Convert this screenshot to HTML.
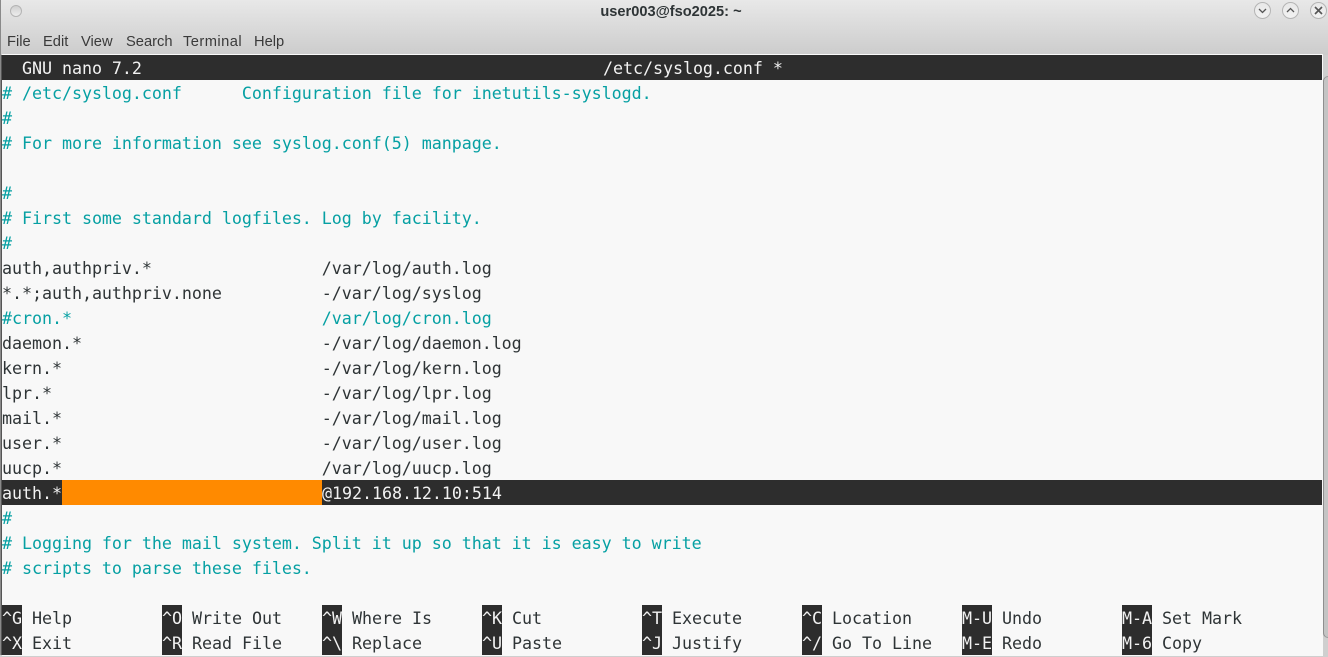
<!DOCTYPE html>
<html><head><meta charset="utf-8"><style>
html,body{margin:0;padding:0}
body{width:1328px;height:655px;overflow:hidden;position:relative;background:#cfcfcf}
#tb{position:absolute;left:0;top:0;width:1328px;height:55px;background:linear-gradient(#e8e8e8,#cccccc)}
#title{position:absolute;left:0;top:4px;width:1342px;text-align:center;font:bold 14.6px/17px "Liberation Sans",sans-serif;color:#2e3436}
.m{position:absolute;top:33px;font:14.7px/18px "Liberation Sans",sans-serif;color:#3a3a3a}
#term{position:absolute;left:2px;top:54px;width:1321px;height:601px;background:#f8f8f8;border-top:1px solid #fafafa;box-sizing:content-box}
.r{position:absolute;left:0;height:25px;width:1320px;white-space:pre;font:16.7px/27px "DejaVu Sans Mono",monospace;color:#2e3436;letter-spacing:-.053px}
.c{color:#06a0a3}
.d{position:absolute;background:#2d2d2d;height:25px;top:0}
.w{color:#f2f2f2}
.t{position:absolute;top:0;white-space:pre}
.btn{position:absolute;top:2px;width:17px;height:17px;border-radius:50%;box-sizing:border-box;border:1px solid #b4b4b4;background:linear-gradient(#e8e8e8,#f2f2f2)}
</style></head><body>
<div id="tb"></div>
<div id="title">user003@fso2025: ~</div>
<div class="btn" style="left:10px;top:5px;width:12px;height:12px;background:linear-gradient(#d0d0d0,#eeeeee)"></div>
<div class="btn" style="left:1254px"><svg width="15" height="15" style="display:block"><path d="M4 6l3.5 3.5L11 6" fill="none" stroke="#555" stroke-width="1.3"/></svg></div>
<div class="btn" style="left:1282px"><svg width="15" height="15" style="display:block"><path d="M4 9l3.5-3.5L11 9" fill="none" stroke="#555" stroke-width="1.3"/></svg></div>
<div class="btn" style="left:1310px"><svg width="15" height="15" style="display:block"><path d="M4 4l7 7M11 4l-7 7" fill="none" stroke="#555" stroke-width="1.6"/></svg></div>
<div class="m" style="left:7px">File</div>
<div class="m" style="left:43px">Edit</div>
<div class="m" style="left:81px">View</div>
<div class="m" style="left:126px">Search</div>
<div class="m" style="left:183px;letter-spacing:.45px">Terminal</div>
<div class="m" style="left:254px">Help</div>
<div style="position:absolute;left:0;top:0;width:1px;height:655px;background:#8a8a8a"></div>
<div style="position:absolute;left:1px;top:55px;width:1px;height:600px;background:#555"></div>
<div id="term">
<div class="r w" style="top:0;background:#2d2d2d;left:0;width:1320px">  GNU nano 7.2<span class="t" style="left:601px">/etc/syslog.conf *</span></div>
<div class="r c" style="top:25px"># /etc/syslog.conf      Configuration file for inetutils-syslogd.</div>
<div class="r c" style="top:50px">#</div>
<div class="r c" style="top:75px"># For more information see syslog.conf(5) manpage.</div>
<div class="r c" style="top:125px">#</div>
<div class="r c" style="top:150px"># First some standard logfiles. Log by facility.</div>
<div class="r c" style="top:175px">#</div>
<div class="r" style="top:200px">auth,authpriv.*                 /var/log/auth.log</div>
<div class="r" style="top:225px">*.*;auth,authpriv.none          -/var/log/syslog</div>
<div class="r c" style="top:250px">#cron.*                         /var/log/cron.log</div>
<div class="r" style="top:275px">daemon.*                        -/var/log/daemon.log</div>
<div class="r" style="top:300px">kern.*                          -/var/log/kern.log</div>
<div class="r" style="top:325px">lpr.*                           -/var/log/lpr.log</div>
<div class="r" style="top:350px">mail.*                          -/var/log/mail.log</div>
<div class="r" style="top:375px">user.*                          -/var/log/user.log</div>
<div class="r" style="top:400px">uucp.*                          /var/log/uucp.log</div>
<div class="r w" style="top:425px;background:#2d2d2d"><span style="position:absolute;left:60px;top:0;width:260px;height:25px;background:#ff8a00"></span><span class="t" style="left:0">auth.*</span><span class="t" style="left:320px">@192.168.12.10:514</span></div>
<div class="r c" style="top:450px">#</div>
<div class="r c" style="top:475px"># Logging for the mail system. Split it up so that it is easy to write</div>
<div class="r c" style="top:500px"># scripts to parse these files.</div>
<div class="r" style="top:550px"><span class="d" style="left:0;width:20px"></span><span class="t w" style="left:0">^G</span><span class="t" style="left:30px">Help</span><span class="d" style="left:160px;width:20px"></span><span class="t w" style="left:160px">^O</span><span class="t" style="left:190px">Write Out</span><span class="d" style="left:320px;width:20px"></span><span class="t w" style="left:320px">^W</span><span class="t" style="left:350px">Where Is</span><span class="d" style="left:480px;width:20px"></span><span class="t w" style="left:480px">^K</span><span class="t" style="left:510px">Cut</span><span class="d" style="left:640px;width:20px"></span><span class="t w" style="left:640px">^T</span><span class="t" style="left:670px">Execute</span><span class="d" style="left:800px;width:20px"></span><span class="t w" style="left:800px">^C</span><span class="t" style="left:830px">Location</span><span class="d" style="left:960px;width:30px"></span><span class="t w" style="left:960px">M-U</span><span class="t" style="left:1000px">Undo</span><span class="d" style="left:1120px;width:30px"></span><span class="t w" style="left:1120px">M-A</span><span class="t" style="left:1160px">Set Mark</span></div>
<div class="r" style="top:575px"><span class="d" style="left:0;width:20px"></span><span class="t w" style="left:0">^X</span><span class="t" style="left:30px">Exit</span><span class="d" style="left:160px;width:20px"></span><span class="t w" style="left:160px">^R</span><span class="t" style="left:190px">Read File</span><span class="d" style="left:320px;width:20px"></span><span class="t w" style="left:320px">^\</span><span class="t" style="left:350px">Replace</span><span class="d" style="left:480px;width:20px"></span><span class="t w" style="left:480px">^U</span><span class="t" style="left:510px">Paste</span><span class="d" style="left:640px;width:20px"></span><span class="t w" style="left:640px">^J</span><span class="t" style="left:670px">Justify</span><span class="d" style="left:800px;width:20px"></span><span class="t w" style="left:800px">^/</span><span class="t" style="left:830px">Go To Line</span><span class="d" style="left:960px;width:30px"></span><span class="t w" style="left:960px">M-E</span><span class="t" style="left:1000px">Redo</span><span class="d" style="left:1120px;width:30px"></span><span class="t w" style="left:1120px">M-6</span><span class="t" style="left:1160px">Copy</span></div>
</div>
<div style="position:absolute;left:1323px;top:76px;width:5px;height:562px;background:#c4c4c4;border-left:1px solid #8f8f8f;border-top:1px solid #9a9a9a;border-bottom:1px solid #9a9a9a;border-radius:5px 0 0 5px;box-sizing:border-box"></div>
</body></html>
